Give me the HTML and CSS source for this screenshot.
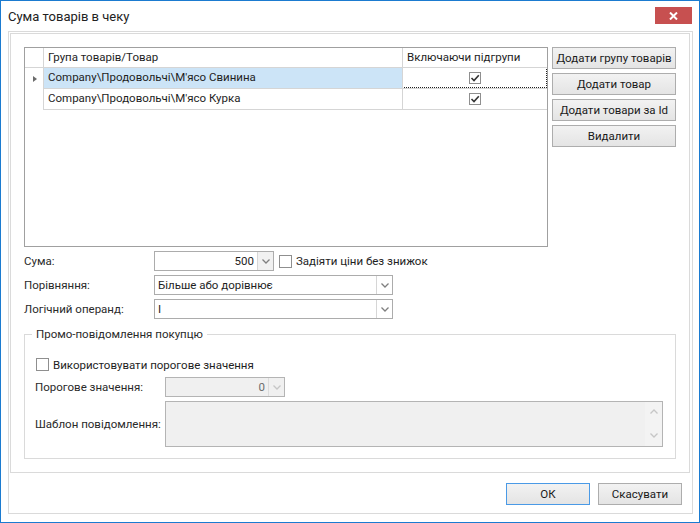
FILE: index.html
```html
<!DOCTYPE html>
<html>
<head>
<meta charset="utf-8">
<link rel="stylesheet" href="styles.css">
</head>
<body>
<div class="window">
  <div class="titlebar">
    <span class="title">Сума товарів в чеку</span>
    <div class="close"><svg width="9" height="8" viewBox="0 0 9 8"><path d="M1 0.5 L8 7.5 M8 0.5 L1 7.5" stroke="#fff" stroke-width="2"/></svg></div>
  </div>
  <div class="frame">
    <div class="panel">
      <div class="top">
        <div class="grid">
          <div class="c rh hd"></div>
          <div class="c c1 hd">Група товарів/Товар</div>
          <div class="c c2 hd">Включаючи підгрупи</div>

          <div class="c rh"><span class="arrow"></span></div>
          <div class="c c1 sel">Company\Продовольчі\М'ясо Свинина</div>
          <div class="c c2 focus"><span class="gcb"><svg width="10" height="10" viewBox="0 0 10 10"><path d="M1.5 5 L4 7.5 L8.8 2.2" fill="none" stroke="#333" stroke-width="1.6"/></svg></span></div>

          <div class="c rh"></div>
          <div class="c c1">Company\Продовольчі\М'ясо Курка</div>
          <div class="c c2"><span class="gcb"><svg width="10" height="10" viewBox="0 0 10 10"><path d="M1.5 5 L4 7.5 L8.8 2.2" fill="none" stroke="#333" stroke-width="1.6"/></svg></span></div>
        </div>
        <div class="side">
          <div class="btn sbtn">Додати групу товарів</div>
          <div class="btn sbtn">Додати товар</div>
          <div class="btn sbtn">Додати товари за Id</div>
          <div class="btn sbtn">Видалити</div>
        </div>
      </div>

      <div class="form">
        <div class="row">
          <span class="label">Сума:</span>
          <div class="combo spin">
            <span class="val right">500</span>
            <span class="dd shaded"><svg width="8" height="5" viewBox="0 0 8 5"><path d="M0.5 0.5 L4 4 L7.5 0.5" fill="none" stroke="#7f7f7f" stroke-width="1.3"/></svg></span>
          </div>
          <span class="cb after"></span>
          <span class="cbtext">Задіяти ціни без знижок</span>
        </div>
        <div class="row">
          <span class="label">Порівняння:</span>
          <div class="combo wide">
            <span class="val">Більше або дорівнює</span>
            <span class="dd"><svg width="8" height="5" viewBox="0 0 8 5"><path d="M0.5 0.5 L4 4 L7.5 0.5" fill="none" stroke="#7f7f7f" stroke-width="1.3"/></svg></span>
          </div>
        </div>
        <div class="row">
          <span class="label">Логічний операнд:</span>
          <div class="combo wide">
            <span class="val">І</span>
            <span class="dd"><svg width="8" height="5" viewBox="0 0 8 5"><path d="M0.5 0.5 L4 4 L7.5 0.5" fill="none" stroke="#7f7f7f" stroke-width="1.3"/></svg></span>
          </div>
        </div>
      </div>

      <div class="group">
        <div class="legend">Промо-повідомлення покупцю</div>
        <div class="grow chk">
          <span class="cb"></span>
          <span class="cbtext">Використовувати порогове значення</span>
        </div>
        <div class="grow thr">
          <span class="glabel">Порогове значення:</span>
          <div class="combo spin dis">
            <span class="val right">0</span>
            <span class="dd"><svg width="8" height="5" viewBox="0 0 8 5"><path d="M0.5 0.5 L4 4 L7.5 0.5" fill="none" stroke="#c6c6c6" stroke-width="1.3"/></svg></span>
          </div>
        </div>
        <div class="grow tpl">
          <span class="glabel">Шаблон повідомлення:</span>
          <div class="memo">
            <div class="scroll">
              <svg width="8" height="5" viewBox="0 0 8 5"><path d="M0.5 4.5 L4 1 L7.5 4.5" fill="none" stroke="#c6c6c6" stroke-width="1.3"/></svg>
              <svg width="8" height="5" viewBox="0 0 8 5"><path d="M0.5 0.5 L4 4 L7.5 0.5" fill="none" stroke="#c6c6c6" stroke-width="1.3"/></svg>
            </div>
          </div>
        </div>
      </div>
    </div>
    <div class="footer">
      <div class="btn fbtn ok">ОК</div>
      <div class="btn fbtn">Скасувати</div>
    </div>
  </div>
</div>
</body>
</html>
```

FILE: styles.css
```css
* { box-sizing: border-box; }
html, body { margin: 0; padding: 0; }
body {
  width: 700px;
  height: 523px;
  overflow: hidden;
  font-family: Roboto, "Noto Sans", sans-serif;
  font-size: 11.5px;
  color: #1e1e1e;
  background: #fff;
}
.window {
  width: 700px;
  height: 523px;
  border: 1px solid #1b7bd0;
  background: #fff;
  display: flex;
  flex-direction: column;
}
.titlebar {
  height: 30px;
  flex: none;
  display: flex;
  justify-content: space-between;
  align-items: flex-start;
  padding: 6px 7px 0 7px;
}
.title {
  font-size: 13px;
  line-height: 20px;
  color: #222;
}
.close {
  width: 37px;
  height: 17px;
  background: #c75050;
  display: flex;
  align-items: center;
  justify-content: center;
}
.close svg { display: block; }
.frame {
  flex: 1;
  margin: 0 6px 8px 7px;
  border: 1px solid #dadada;
  padding: 1px 2px 0 1px;
  display: flex;
  flex-direction: column;
}
.panel {
  height: 440px;
  flex: none;
  border: 1px solid #dadada;
  padding: 13px 0 0 13px;
  display: flex;
  flex-direction: column;
}
.top {
  display: flex;
  gap: 4px;
  align-items: flex-start;
}
.grid {
  width: 524px;
  height: 200px;
  border: 1px solid #a0a0a0;
  background: #fff;
  display: grid;
  grid-template-columns: 19px 359px 144px;
  grid-template-rows: 20px 21px 21px;
  align-content: start;
}
.c {
  line-height: 19px;
  white-space: nowrap;
  overflow: hidden;
  position: relative;
}
.c.hd { border-bottom: 1px solid #d5d5d5; line-height: 19px; }
.c.rh { border-right: 1px solid #d5d5d5; display: flex; align-items: center; justify-content: center; }
.c.c1 { border-right: 1px solid #d5d5d5; padding-left: 4px; }
.c.c1, .c.c2 { border-bottom: 1px solid #d5d5d5; }
.c.c2 { padding-left: 4px; display: flex; align-items: center; justify-content: center; }
.c.c2.hd { justify-content: flex-start; display: block; }
.c.sel { background: #cce4f7; }
.c.focus::after {
  content: "";
  position: absolute;
  top: -1px;
  left: -1px;
  right: 0;
  bottom: 0;
  border: 1px dotted #222;
}
.arrow {
  width: 0;
  height: 0;
  border-left: 4px solid #6b6b6b;
  border-top: 3.5px solid transparent;
  border-bottom: 3.5px solid transparent;
  margin-left: 2px;
}
.gcb {
  width: 12px;
  height: 12px;
  border: 1px solid #8f8f8f;
  background: #fff;
  display: flex;
  align-items: center;
  justify-content: center;
  margin-left: -4px;
}
.gcb svg { display: block; }
.side {
  display: flex;
  flex-direction: column;
  gap: 4px;
}
.btn {
  border: 1px solid #adadad;
  background: linear-gradient(#f2f2f2, #e4e4e4);
  color: #1a1a1a;
  display: flex;
  align-items: center;
  justify-content: center;
  white-space: nowrap;
  line-height: 18px;
}
.sbtn { width: 124px; height: 22px; }
.form {
  margin-top: 4px;
  display: flex;
  flex-direction: column;
  gap: 4px;
}
.row {
  display: flex;
  align-items: center;
  height: 20px;
}
.label {
  width: 130px;
  flex: none;
  color: #2a2a2a;
  white-space: nowrap;
}
.combo {
  display: flex;
  height: 20px;
  border: 1px solid #acacac;
  background: #fff;
  flex: none;
}
.combo.spin { width: 120px; }
.combo.wide { width: 239px; }
.val {
  flex: 1;
  padding: 0 3px;
  line-height: 18px;
  white-space: nowrap;
}
.val.right { text-align: right; }
.dd {
  width: 16px;
  flex: none;
  border-left: 1px solid #d6d6d6;
  display: flex;
  align-items: center;
  justify-content: center;
}
.dd svg { display: block; }
.dd.shaded { background: #f1f1f1; }
.cb {
  width: 13px;
  height: 13px;
  border: 1px solid #8f8f8f;
  background: #fff;
  flex: none;
}
.cb.after { margin-left: 5px; }
.cbtext {
  margin-left: 4px;
  white-space: nowrap;
}
.group {
  margin-top: 15px;
  width: 652px;
  border: 1px solid #dadada;
  padding-bottom: 11px;
}
.legend {
  width: max-content;
  margin: -9px 0 0 7px;
  padding: 0 4px;
  background: #fff;
  line-height: 16px;
  color: #2a2a2a;
}
.grow {
  display: flex;
  align-items: center;
}
.grow.chk {
  margin-top: 12px;
  height: 21px;
  padding-left: 11px;
}
.grow.thr {
  margin-top: 2px;
  height: 20px;
  padding-left: 10px;
}
.grow.tpl {
  margin-top: 4px;
  height: 46px;
  padding-left: 10px;
}
.glabel {
  width: 130px;
  flex: none;
  color: #2a2a2a;
  white-space: nowrap;
}
.combo.dis {
  background: #f0f0f0;
  border-color: #b4b4b4;
}
.combo.dis .val { color: #6d6d6d; }
.combo.dis .dd { border-left-color: #dcdcdc; }
.memo {
  width: 498px;
  height: 46px;
  border: 1px solid #b4b4b4;
  background: #f0f0f0;
  display: flex;
  justify-content: flex-end;
}
.scroll {
  width: 17px;
  display: flex;
  flex-direction: column;
  justify-content: space-between;
  align-items: center;
  padding: 7px 0 8px;
  background: #f3f3f3;
}
.scroll svg { display: block; }
.footer {
  display: flex;
  justify-content: flex-end;
  gap: 8px;
  padding: 10px 8px 0 0;
}
.fbtn { width: 84px; height: 22px; }
.fbtn.ok { border-color: #4a9ae6; }
```
